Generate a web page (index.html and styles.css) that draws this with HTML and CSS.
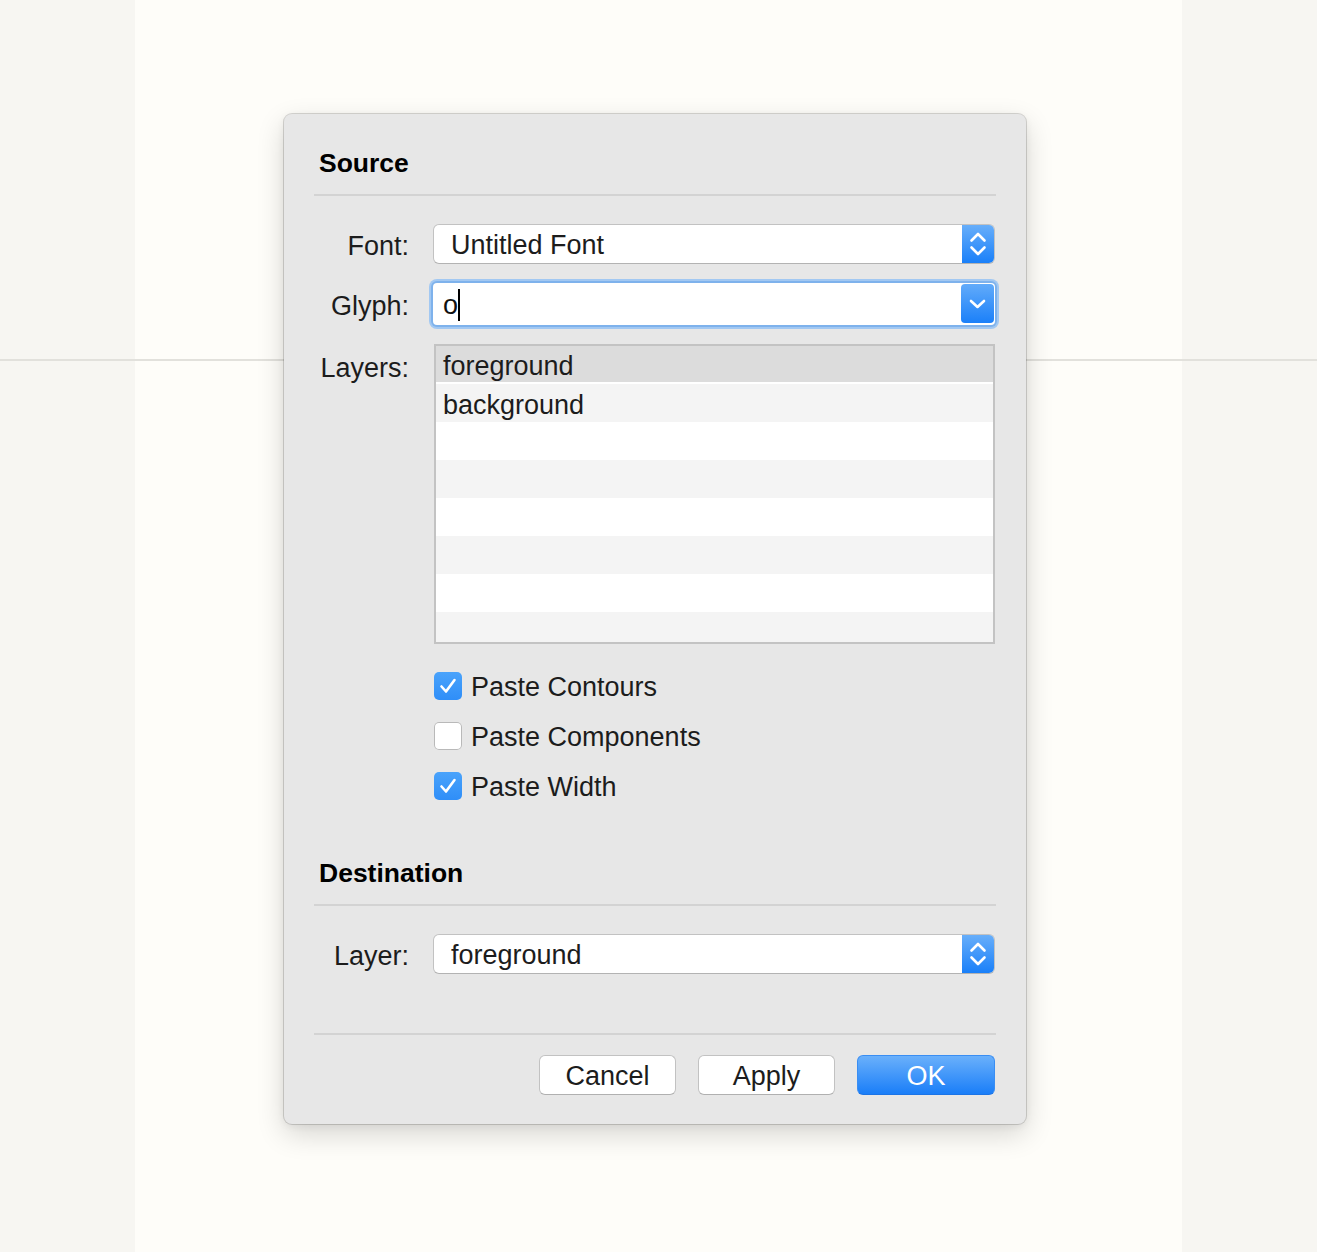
FILE: index.html
```html
<!DOCTYPE html>
<html>
<head>
<meta charset="utf-8">
<title>Paste Glyph</title>
<link rel="stylesheet" href="styles.css">
</head>
<body>
<div class="app">
  <div class="app-top"></div>
  <div class="app-bottom"></div>

  <div class="sheet">
    <div class="section-title">Source</div>

    <div class="form">
      <div class="label">Font:</div>
      <div class="popup">
        <span class="popup-text">Untitled Font</span>
        <span class="popup-arrows">
          <svg width="32" height="38" viewBox="0 1 32 38"><path d="M9.5 16.5 L16 10 L22.5 16.5 M9.5 23.5 L16 30 L22.5 23.5" fill="none" stroke="#fff" stroke-width="2.6" stroke-linecap="round" stroke-linejoin="round"/></svg>
        </span>
      </div>

      <div class="label">Glyph:</div>
      <div class="combo">
        <span class="combo-text">o<span class="caret"></span></span>
        <span class="combo-button">
          <svg width="33" height="39" viewBox="0 0 33 39"><path d="M10 17 L16.5 23 L23 17" fill="none" stroke="#fff" stroke-width="2.6" stroke-linecap="round" stroke-linejoin="round"/></svg>
        </span>
      </div>

      <div class="label label-top">Layers:</div>
      <div class="list">
        <div class="row selected">foreground</div>
        <div class="row odd">background</div>
        <div class="row"></div>
        <div class="row odd"></div>
        <div class="row"></div>
        <div class="row odd"></div>
        <div class="row"></div>
        <div class="row odd"></div>
      </div>
    </div>

    <div class="checks">
      <div class="check-row">
        <span class="checkbox checked"><svg width="28" height="28" viewBox="0 0 28 28"><path d="M7.5 14.5 L12 19.5 L20.5 8" fill="none" stroke="#fff" stroke-width="2.6" stroke-linecap="round" stroke-linejoin="round"/></svg></span>
        <span class="check-label">Paste Contours</span>
      </div>
      <div class="check-row">
        <span class="checkbox"></span>
        <span class="check-label">Paste Components</span>
      </div>
      <div class="check-row">
        <span class="checkbox checked"><svg width="28" height="28" viewBox="0 0 28 28"><path d="M7.5 14.5 L12 19.5 L20.5 8" fill="none" stroke="#fff" stroke-width="2.6" stroke-linecap="round" stroke-linejoin="round"/></svg></span>
        <span class="check-label">Paste Width</span>
      </div>
    </div>

    <div class="section-title dest">Destination</div>

    <div class="form form-dest">
      <div class="label">Layer:</div>
      <div class="popup">
        <span class="popup-text">foreground</span>
        <span class="popup-arrows">
          <svg width="32" height="38" viewBox="0 1 32 38"><path d="M9.5 16.5 L16 10 L22.5 16.5 M9.5 23.5 L16 30 L22.5 23.5" fill="none" stroke="#fff" stroke-width="2.6" stroke-linecap="round" stroke-linejoin="round"/></svg>
        </span>
      </div>
    </div>

    <div class="footer">
      <button class="btn">Cancel</button>
      <button class="btn">Apply</button>
      <button class="btn btn-primary">OK</button>
    </div>
  </div>
</div>
</body>
</html>
```

FILE: styles.css
```css
* { box-sizing: border-box; }

html, body {
  margin: 0;
  padding: 0;
}

body {
  font-family: "Liberation Sans", Arial, sans-serif;
  font-size: 27px;
  color: #1c1c1c;
}

.app {
  position: relative;
  width: 1317px;
  height: 1252px;
  display: flex;
  flex-direction: column;
  background: linear-gradient(to right, #f7f6f2 0, #f7f6f2 135px, #fefdf9 135px, #fefdf9 1182px, #f7f6f2 1182px);
}

.app-top {
  height: 361px;
  border-bottom: 2px solid #e2e1dc;
}

.app-bottom {
  flex: 1;
}

.sheet {
  position: absolute;
  top: 114px;
  left: 284px;
  width: 742px;
  height: 1010px;
  padding: 34px 30px 0 30px;
  background: #e7e7e7;
  border-radius: 8px;
  box-shadow: 0 0 0 1px rgba(0, 0, 0, 0.15), 0 10px 28px rgba(0, 0, 0, 0.16), 0 2px 8px rgba(0, 0, 0, 0.06);
  display: flex;
  flex-direction: column;
}

.section-title {
  font-size: 26.5px;
  font-weight: bold;
  color: #000;
  line-height: 30px;
  padding: 0 0 16px 5px;
  border-bottom: 2px solid #d3d3d3;
}

.section-title.dest {
  margin-top: 47px;
}

.form {
  margin-top: 28px;
  display: grid;
  grid-template-columns: 95px 562px;
  column-gap: 24px;
  row-gap: 19px;
  align-items: center;
}

.label {
  text-align: right;
  line-height: 30px;
  padding-top: 3px;
  color: #1c1c1c;
}

.label-top {
  align-self: start;
  padding-top: 9px;
}

.popup {
  height: 40px;
  display: flex;
  align-items: stretch;
  background: #fff;
  border: 1px solid #c2c2c2;
  border-bottom-color: #b3b3b3;
  border-radius: 6px;
  overflow: hidden;
}

.popup-text {
  flex: 1;
  padding-left: 17px;
  padding-top: 2px;
  line-height: 36px;
  color: #1c1c1c;
}

.popup-arrows {
  width: 32px;
  display: flex;
  background: linear-gradient(to bottom, #67aefa, #1a80f9);
}

.combo {
  height: 42px;
  display: flex;
  align-items: stretch;
  background: #fff;
  border-radius: 4px;
  box-shadow: 0 0 0 2px #7eb2ec, 0 0 0 4px #a2c8f2;
  overflow: hidden;
}

.combo-text {
  flex: 1;
  padding-left: 10px;
  padding-top: 3px;
  color: #111;
  display: flex;
  align-items: center;
}

.caret {
  display: inline-block;
  width: 2px;
  height: 32px;
  background: #000;
  margin-top: -2px;
}

.combo-button {
  width: 33px;
  margin: 1px 1px 2px 0;
  border-radius: 4px;
  display: flex;
  background: linear-gradient(to bottom, #62abfa, #1b80f9);
}

.list {
  margin-left: 1px;
  height: 300px;
  border: 2px solid #c3c3c3;
  background: #fff;
  overflow: hidden;
}

.row {
  height: 38px;
  line-height: 38px;
  padding-left: 7px;
  padding-top: 2px;
  background: #fff;
  color: #1c1c1c;
}

.row.odd {
  background: #f4f4f4;
}

.row.selected {
  background: #dcdcdc;
  border-bottom: 2px solid #fff;
  line-height: 36px;
}

.checks {
  margin-top: 17px;
  padding-left: 120px;
  display: flex;
  flex-direction: column;
}

.check-row {
  height: 50px;
  display: flex;
  align-items: center;
  gap: 9px;
}

.checkbox {
  width: 28px;
  height: 28px;
  border-radius: 5px;
  background: #fff;
  box-shadow: inset 0 0 0 1px #b9b9b9;
  display: flex;
}

.checkbox.checked {
  background: linear-gradient(to bottom, #4aa3fb, #2f8ef8);
  box-shadow: none;
}

.check-label {
  color: #1c1c1c;
  line-height: 30px;
  padding-top: 2px;
}

.form-dest {
  margin-top: 28px;
}

.footer {
  margin-top: 59px;
  padding-top: 20px;
  border-top: 2px solid #d3d3d3;
  display: flex;
  justify-content: flex-end;
  gap: 22px;
  padding-right: 1px;
}

.btn {
  font-family: "Liberation Sans", Arial, sans-serif;
  font-size: 27px;
  height: 40px;
  width: 137px;
  padding: 2px 0 0 0;
  border: 1px solid #c2c2c2;
  border-bottom-color: #b0b0b0;
  border-radius: 6px;
  background: #fff;
  color: #1c1c1c;
}

.btn-primary {
  width: 138px;
  color: #fff;
  border-color: #3a8ef3;
  border-bottom-color: #1c74e6;
  background: linear-gradient(to bottom, #6ab0fb, #1a7ef8);
}
```
